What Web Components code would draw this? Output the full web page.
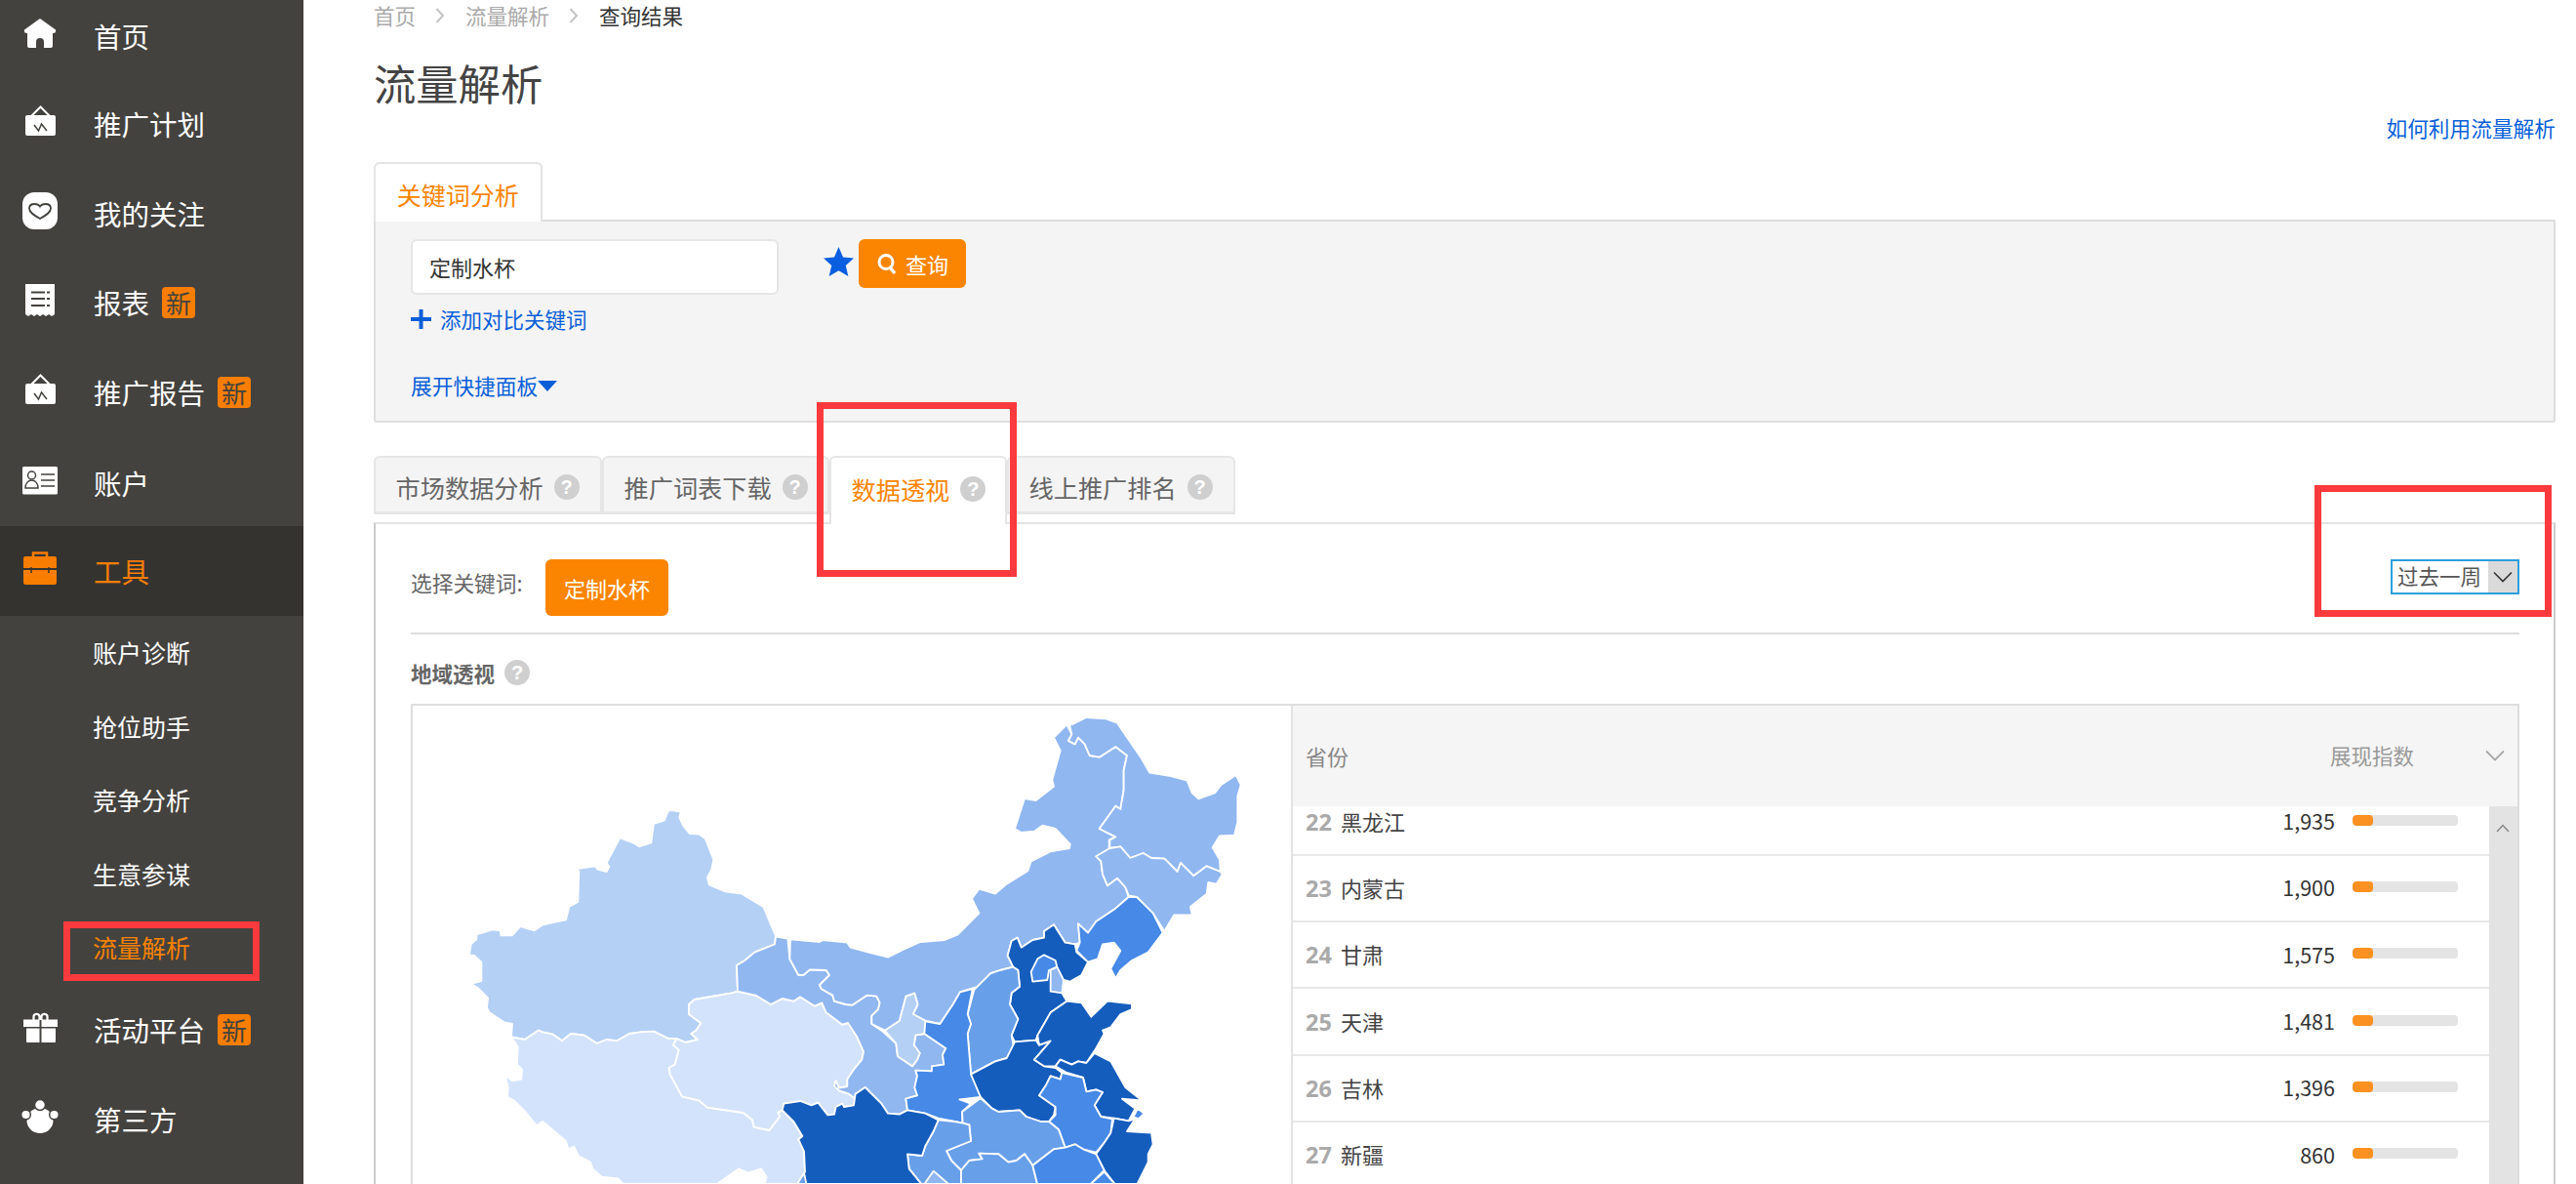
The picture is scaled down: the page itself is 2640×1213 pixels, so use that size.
<!DOCTYPE html>
<html lang="zh">
<head>
<meta charset="utf-8">
<title>流量解析</title>
<style>
  html, body { margin: 0; padding: 0; height: 1213px; overflow: hidden; background: #fff; }
  body { display: flex; font-family: "Noto Sans CJK SC", "Liberation Sans", sans-serif; color: #333; position: relative; }
</style>
</head>
<body>
<app-sidebar>
  <nav-item icon="home" first>首页</nav-item>
  <nav-item icon="picture">推广计划</nav-item>
  <nav-item icon="heart">我的关注</nav-item>
  <nav-item icon="receipt" badge="新">报表</nav-item>
  <nav-item icon="picture" badge="新">推广报告</nav-item>
  <nav-item icon="card" style="padding-top:4px">账户</nav-item>
  <nav-item icon="case" active>工具</nav-item>
  <sub-item>账户诊断</sub-item>
  <sub-item>抢位助手</sub-item>
  <sub-item>竞争分析</sub-item>
  <sub-item>生意参谋</sub-item>
  <sub-item active>流量解析</sub-item>
  <nav-item icon="gift" badge="新">活动平台</nav-item>
  <nav-item icon="people">第三方</nav-item>
</app-sidebar>
<main-area></main-area>
<red-mark x="65" y="944" w="201" h="61"></red-mark>
<red-mark x="837" y="412" w="205" h="179"></red-mark>
<red-mark x="2372" y="497" w="243" h="135"></red-mark>

<script>
var ICONS = {
  home: `<path fill="#fff" d="M20 5 36 16.500Q37 20 33 20V33Q33 35 31 35H9Q7 35 7 33V20Q3 20 4 16.500Z"/><path fill="#44423e" d="M16 35V29a4 4 0 0 1 8 0V35Z"/>`,
  picture: `<path fill="none" stroke="#fff" stroke-width="2" d="M11 15 20.500 5.500 30 15"/><rect x="5" y="14" width="31" height="21" rx="2" fill="#fff"/><path fill="none" stroke="#44423e" stroke-width="1.500" d="M14 24 18.500 30 21.500 23 27 30"/>`,
  heart: `<rect x="2" y="1" width="36" height="38" rx="12" fill="#fff"/><path fill="none" stroke="#44423e" stroke-width="1.800" d="M20 28C14 24.500 9 21.500 9 17.500 9 14.500 11.500 13 14.500 13 17 13 19 14 20 15.500 21 14 23 13 25.500 13 28.500 13 31 14.500 31 17.500 31 21.500 26 24.500 20 28Z"/>`,
  receipt: `<path fill="#fff" d="M5 4H35V35L32 37 29 35 26 37 23 35 20 37 17 35 14 37 11 35 8 37 5 35Z"/><path stroke="#44423e" stroke-width="1.800" d="M11 12.500H25M27 12.500H30M11 19H25M27 19H30M11 26H25M27 26H30"/>`,
  card: `<rect x="2" y="6" width="36" height="28.500" rx="1.500" fill="#fff"/><circle cx="11.500" cy="15" r="4" fill="none" stroke="#44423e" stroke-width="1.500"/><path fill="none" stroke="#44423e" stroke-width="1.500" d="M5 28C5 23 8 20 11.500 20S18 23 18 28ZM21 14H35M21 20H35M21 26H35"/>`,
  case: `<path fill="none" stroke="#f97d00" stroke-width="2.500" d="M13 9V4.500H27V9"/><path fill="#f97d00" d="M5 8H35Q37 8 37 10V20H3V10Q3 8 5 8ZM3 22H37V35Q37 37 35 37H5Q3 37 3 35Z"/><path stroke="#353330" stroke-width="1.500" d="M11 19V25M29 19V25"/>`,
  gift: `<path fill="none" stroke="#fff" stroke-width="2.200" d="M19.500 13V9A3.200 3.200 0 0 0 13.500 9V13M21.500 13V9A3.200 3.200 0 0 1 27.500 9V13"/><path fill="#fff" d="M3 12.500H19.500V20H3ZM21.500 12.500H38V20H21.500ZM6 21.500H19.500V36H7Q6 36 6 35ZM21.500 21.500H36V35Q36 36 35 36H21.500Z"/>`,
  people: `<ellipse cx="20" cy="24" rx="13.500" ry="13" fill="#fff"/><g fill="#fff" stroke="#44423e" stroke-width="1.500"><circle cx="20" cy="8" r="5.500"/><circle cx="5.500" cy="18" r="4.800"/><circle cx="34.500" cy="18" r="4.800"/></g>`
};

class AppSidebar extends HTMLElement {
  constructor() {
    super();
    this.attachShadow({ mode: "open" }).innerHTML = `
      <style>
        :host { display: block; flex: 0 0 311px; width: 311px; height: 1213px; background: #44423e; overflow: hidden; }
      </style>
      <slot></slot>`;
  }
}

class NavItem extends HTMLElement {
  constructor() {
    super();
    var badge = this.getAttribute("badge");
    this.attachShadow({ mode: "open" }).innerHTML = `
      <style>
        :host { display: flex; align-items: center; height: 91.5px; padding-left: 21px; color: #fff; font-size: 28.500px; box-sizing: border-box; }
        :host([first]) { height: 81.500px; padding-bottom: 7px; }
        :host([active]) { background: #353330; color: #f77e00; }
        svg { width: 40px; height: 40px; margin: 0 35px 6px 0; flex: none; }
        .text { line-height: 40px; }
        .badge { width: 34px; height: 32px; margin-left: 13px; background: #f97d00; border-radius: 4px; color: #44423e; font-size: 26px; line-height: 32px; text-align: center; }
      </style>
      <svg viewBox="0 0 40 40">${ICONS[this.getAttribute("icon")]}</svg>
      <span class="text"><slot></slot></span>
      ${badge ? `<span class="badge">${badge}</span>` : ""}`;
  }
}

class SubItem extends HTMLElement {
  constructor() {
    super();
    this.attachShadow({ mode: "open" }).innerHTML = `
      <style>
        :host { display: block; box-sizing: border-box; height: 75.500px; line-height: 73.500px; padding-left: 95px; color: #fff; font-size: 25px; }
        :host([active]) { color: #f98200; }
        :host(:first-of-type) { margin-top: 1.500px; }
      </style>
      <slot></slot>`;
  }
}

class RedMark extends HTMLElement {
  constructor() {
    super();
    this.attachShadow({ mode: "open" }).innerHTML = `
      <style>
        :host { display: block; position: absolute; box-sizing: border-box; border: 7px solid #fb3a3d; z-index: 5; pointer-events: none; }
      </style>`;
    this.style.left = this.getAttribute("x") + "px";
    this.style.top = this.getAttribute("y") + "px";
    this.style.width = this.getAttribute("w") + "px";
    this.style.height = this.getAttribute("h") + "px";
  }
}

class HelpIcon extends HTMLElement {
  constructor() {
    super();
    this.attachShadow({ mode: "open" }).innerHTML = `
      <style>
        :host { display: inline-block; width: 26px; height: 26px; border-radius: 50%; background: #cfcfcf; color: #fff; font: bold 20px/26px "Liberation Sans", sans-serif; text-align: center; flex: none; }
      </style>?`;
  }
}

class BreadCrumb extends HTMLElement {
  constructor() {
    super();
    var chev = `<svg width="10" height="18" viewBox="0 0 10 18"><path d="M1.500 2 8 9 1.500 16" fill="none" stroke="#c4c4c4" stroke-width="2"/></svg>`;
    this.attachShadow({ mode: "open" }).innerHTML = `
      <style>
        :host { display: flex; align-items: center; height: 32px; font-size: 21.500px; line-height: 32px; color: #aaa; }
        svg { margin: 0 21px 0 20px; }
        b { font-weight: normal; color: #333; }
      </style>
      <span>首页</span>${chev}<span>流量解析</span>${chev}<b>查询结果</b>`;
  }
}

class PageHead extends HTMLElement {
  constructor() {
    super();
    this.attachShadow({ mode: "open" }).innerHTML = `
      <style>
        :host { display: flex; justify-content: space-between; height: 134px; }
        h1 { margin: 22px 0 0; font-size: 43.300px; line-height: 60px; font-weight: normal; color: #444; }
        a { align-self: flex-end; margin-bottom: 20px; font-size: 21.700px; line-height: 30px; color: #0a5fd8; }
      </style>
      <h1>流量解析</h1>
      <a>如何利用流量解析</a>`;
  }
}

class KeywordPanel extends HTMLElement {
  constructor() {
    super();
    this.attachShadow({ mode: "open" }).innerHTML = `
      <style>
        :host { display: block; }
        .tab { position: relative; z-index: 1; width: 172.500px; height: 61px; box-sizing: border-box; border: 2px solid #e4e4e4; border-bottom: 0; border-radius: 6px 6px 0 0; background: #fff; color: #fb8500; font-size: 25px; line-height: 62px; text-align: center; }
        .panel { margin-top: -2px; height: 208px; box-sizing: border-box; padding: 18px 36px; background: #f4f4f4; border: 2px solid #dedede; border-radius: 0 0 3px 3px; }
        .row { display: flex; align-items: flex-start; }
        .input { width: 377px; height: 57px; box-sizing: border-box; background: #fff; border: 2px solid #e6e6e6; border-radius: 6px; padding-left: 17px; font-size: 22px; line-height: 52px; color: #333; }
        .star { margin: 8px 5px 0 46px; }
        .btn { display: flex; align-items: center; gap: 8px; width: 110px; height: 50px; box-sizing: border-box; padding-left: 18px; background: #fb8500; border-radius: 6px; color: #fff; font-size: 22px; }
        .add { display: flex; align-items: center; gap: 9px; margin-top: 10px; font-size: 21.500px; line-height: 30px; color: #0a5fd8; }
        .more { display: flex; align-items: center; margin-top: 38px; font-size: 21.700px; line-height: 30px; color: #0a5fd8; }
      </style>
      <div class="tab">关键词分析</div>
      <div class="panel">
        <div class="row">
          <div class="input">定制水杯</div>
          <svg class="star" width="31" height="30" viewBox="0 0 31 30"><path fill="#0a5fe0" d="M15.500 0 20 10.500 31 11.500 22.800 19 25.300 30 15.500 24.200 5.700 30 8.200 19 0 11.500 11 10.500Z"/></svg>
          <div class="btn"><svg width="22" height="24" viewBox="0 0 22 24"><circle cx="10" cy="10.500" r="7" fill="none" stroke="#fff" stroke-width="3"/><path d="M14 16 19 22" stroke="#fff" stroke-width="3.500"/></svg>查询</div>
        </div>
        <div class="add"><svg width="21" height="22" viewBox="0 0 21 22"><path d="M10.500 1V21M0 11H21" stroke="#0a5fd8" stroke-width="4"/></svg>添加对比关键词</div>
        <div class="more">展开快捷面板<svg width="20" height="11" viewBox="0 0 20 11"><path fill="#0a5fd8" d="M0 0H20L10 11Z"/></svg></div>
      </div>`;
  }
}

class TabBar extends HTMLElement {
  constructor() {
    super();
    this.attachShadow({ mode: "open" }).innerHTML = `
      <style>
        :host { display: flex; align-items: flex-start; height: 68px; margin-top: 34px; position: relative; z-index: 1; }
        .tab { display: flex; align-items: center; gap: 11px; height: 60px; box-sizing: border-box; padding: 5px 0 0 20.500px; border: 2px solid #e6e6e6; border-bottom-width: 3px; border-radius: 6px 6px 0 0; background: #f4f4f4; color: #666; font-size: 25.200px; }
        .on { height: 70px; padding-top: 5px; padding-bottom: 10px; background: #fff; color: #fb8500; border-bottom: 0; }
      </style>
      <div class="tab" style="width:234px">市场数据分析<help-icon></help-icon></div>
      <div class="tab" style="width:233px">推广词表下载<help-icon></help-icon></div>
      <div class="tab on" style="width:182px">数据透视<help-icon></help-icon></div>
      <div class="tab" style="width:234px">线上推广排名<help-icon></help-icon></div>`;
  }
}

class ChinaMap extends HTMLElement {
  constructor() {
    super();
    var C = { a: "#155dbd", b: "#4689e6", c: "#689fe9", d: "#90b7f0", e: "#b4d0f5", f: "#d3e3fb" };
    // west is traced in the crop starting at x=400, east in the crop at x=860, so x below can go negative
    var shapes = [
      ["e", "-517,363 -487,368 -491,385 -480,410 -460,435 -430,437 -412,450 -386,515 -392,545 -405,570 -400,592 -350,613 -300,620 -233,660 -195,750 -198,775 -260,800 -290,825 -315,840 -312,920 -330,925 -445,945 -462,960 -462,990 -425,1018 -440,1040 -455,1050 -435,1068 -472,1077 -500,1065 -525,1065 -570,1043 -610,1045 -645,1050 -683,1072 -715,1068 -745,1080 -783,1055 -825,1050 -852,1072 -880,1052 -912,1045 -925,1040 -967,1068 -1008,1060 -1005,1020 -1030,1015 -1075,985 -1083,970 -1080,940 -1110,910 -1132,897 -1118,893 -1100,888 -1100,830 -1122,810 -1137,808 -1132,775 -1115,760 -1115,745 -1065,730 -1042,733 -1040,748 -1005,748 -980,720 -937,733 -910,715 -840,700 -830,660 -803,645 -800,550 -817,545 -750,535 -743,545 -715,552 -707,537 -715,525 -674,448 -630,465 -615,475 -578,463 -570,405 -538,395 -525,365"],
      ["f", "-1008,1060 -967,1068 -925,1040 -912,1045 -880,1052 -852,1072 -825,1050 -783,1055 -745,1080 -715,1068 -683,1072 -645,1050 -610,1045 -570,1043 -525,1065 -500,1065 -510,1085 -493,1100 -505,1145 -523,1155 -520,1175 -483,1243 -432,1255 -405,1277 -295,1293 -267,1315 -262,1337 -215,1347 -183,1305 -188,1292 -175,1285 -140,1320 -113,1365 -125,1375 -108,1412 -105,1475 -130,1515 -230,1515 -223,1490 -240,1465 -280,1478 -308,1465 -380,1515 -660,1515 -680,1495 -730,1490 -758,1465 -765,1445 -802,1425 -815,1397 -833,1405 -840,1380 -912,1320 -930,1333 -965,1290 -1000,1255 -1020,1245 -1018,1215 -1025,1187 -1015,1185 -1005,1195 -977,1190 -975,1160 -990,1145 -988,1090"],
      ["f", "-312,920 -255,933 -210,960 -175,942 -140,950 -120,937 -75,965 -53,955 -40,985 10,1022 27,1017 55,1060 75,1105 70,1130 45,1160 25,1190 25,1212 0,1217 -10,1195 -15,1210 0,1225 30,1235 50,1250 45,1270 15,1275 10,1265 -10,1275 -15,1298 -35,1300 -65,1262 -85,1270 -120,1257 -170,1265 -175,1285 -188,1292 -183,1305 -215,1347 -262,1337 -267,1315 -295,1293 -405,1277 -432,1255 -483,1243 -520,1175 -523,1155 -505,1145 -493,1100 -510,1085 -500,1065 -472,1077 -435,1068 -455,1050 -440,1040 -425,1018 -462,990 -462,960 -445,945 -330,925"],
      ["d", "-195,752 -158,758 -152,820 -125,870 -110,870 -90,853 -40,855 -30,870 -60,900 -55,912 -20,932 -15,950 20,960 40,962 85,932 115,935 125,955 120,975 100,995 100,1020 130,1040 175,1080 180,1120 225,1150 240,1130 248,1110 230,1085 235,1055 262,1050 328,1095 318,1115 322,1145 285,1150 285,1165 235,1163 240,1180 232,1215 240,1240 205,1250 210,1285 185,1298 150,1295 130,1265 80,1215 50,1235 50,1250 30,1235 0,1225 -15,1210 -10,1195 0,1217 25,1212 25,1190 45,1160 70,1130 75,1105 55,1060 27,1017 10,1022 -40,985 -53,955 -75,965 -120,937 -140,950 -175,942 -210,960 -255,933 -312,920 -315,840 -290,825 -260,800 -198,775"],
      ["e", "140,1040 185,1010 205,935 232,925 242,960 228,990 268,1008 262,1050 235,1055 230,1085 248,1110 240,1130 225,1150 180,1120 175,1080"],
      ["d", "-150,760 -60,768 -50,762 25,770 35,785 90,800 150,815 200,790 250,768 325,762 365,745 430,680 408,635 430,605 480,620 515,590 580,550 590,520 650,490 708,480 710,468 665,420 625,410 600,428 560,432 540,420 570,327 605,333 660,290 655,270 680,180 660,140 700,100 715,130 705,150 725,160 735,140 755,160 770,195 800,200 850,168 885,195 875,240 875,300 865,360 850,350 800,420 850,445 830,455 830,490 790,505 805,520 810,560 825,595 855,572 880,600 890,630 850,665 790,705 765,740 735,712 740,770 725,775 695,770 660,715 630,735 630,755 595,762 560,785 548,755 530,765 518,810 535,845 495,855 465,865 430,905 410,910 372,922 350,960 310,1020 265,1010 228,990 242,960 232,925 205,935 185,1010 140,1040 100,1020 100,995 120,975 125,955 115,935 85,932 40,962 20,960 -15,950 -20,932 -55,912 -60,900 -30,870 -40,855 -90,853 -110,870 -125,870 -152,820"],
      ["d", "715,100 760,78 820,82 855,95 930,205 955,248 1020,258 1070,272 1085,310 1105,328 1155,310 1175,285 1220,255 1235,285 1225,320 1225,400 1215,440 1170,442 1148,478 1170,515 1172,552 1130,535 1090,565 1050,525 1040,552 1000,512 960,510 935,495 895,510 865,475 832,480 832,455 850,445 800,420 850,350 865,360 875,300 875,240 885,195 850,168 800,200 770,195 755,160 735,140 725,160 705,150 715,130 708,100"],
      ["d", "832,480 865,475 895,510 935,495 960,510 1000,512 1040,552 1050,525 1090,565 1130,535 1172,552 1178,560 1160,590 1135,585 1130,620 1080,660 1085,685 1030,685 1000,735 965,680 935,650 915,630 890,625 880,600 855,572 825,595 810,560 805,520 790,505"],
      ["b", "890,630 915,630 935,650 965,680 995,740 950,800 900,825 865,855 850,880 835,850 865,795 845,770 810,775 795,820 765,830 730,795 740,770 735,712 765,740 790,705 850,665"],
      ["a", "518,810 530,765 548,755 560,785 595,762 630,755 630,735 660,715 695,770 725,775 730,800 765,830 745,870 710,890 690,885 685,925 700,950 650,985 610,1055 605,1070 540,1075 530,1055 550,1005 525,960 530,925 555,905 550,855 535,845"],
      ["b", "630,808 665,825 670,845 645,855 640,885 595,890 590,860 610,820"],
      ["d", "670,845 690,885 685,925 650,920 650,855"],
      ["c", "535,845 550,855 555,905 530,925 525,960 550,1005 530,1055 540,1110 515,1125 480,1135 405,1175 395,1050 405,1020 395,990 415,915 465,865 495,855"],
      ["b", "410,912 395,990 405,1020 395,1050 405,1170 435,1245 370,1252 405,1265 378,1290 380,1325 355,1320 305,1310 265,1295 210,1285 205,1250 240,1240 232,1215 240,1180 235,1163 285,1165 285,1150 322,1145 318,1115 328,1095 262,1050 265,1012 310,1020 350,960 372,922"],
      ["a", "405,1175 480,1135 515,1125 540,1075 605,1070 615,1085 650,1072 600,1130 630,1150 665,1155 685,1170 680,1190 650,1180 635,1210 615,1240 665,1275 660,1300 645,1320 620,1320 575,1305 555,1285 490,1290 470,1280 435,1245"],
      ["a", "610,1055 650,985 700,950 745,955 775,998 825,950 900,958 900,975 865,990 835,1030 810,1040 815,1050 790,1095 760,1140 735,1135 715,1145 680,1130 665,1150 630,1150 600,1130 650,1072 615,1085"],
      ["a", "680,1130 715,1145 735,1135 760,1140 785,1110 835,1135 880,1215 930,1255 870,1250 910,1280 890,1318 845,1310 805,1305 785,1270 810,1230 790,1222 760,1228 750,1185 700,1170 665,1150"],
      ["b", "918,1280 938,1295 920,1312 905,1305"],
      ["b", "650,1180 680,1190 685,1170 750,1185 760,1228 790,1222 810,1230 785,1270 805,1305 840,1312 835,1355 815,1385 790,1415 750,1405 725,1390 695,1400 675,1345 645,1320 665,1300 665,1275 615,1240 635,1210"],
      ["a", "845,1310 890,1318 910,1312 885,1350 960,1355 965,1390 950,1420 950,1445 915,1515 850,1515 815,1470 790,1420 815,1385 835,1355"],
      ["c", "378,1290 435,1248 470,1280 490,1290 555,1285 575,1305 620,1320 645,1320 675,1345 695,1400 660,1405 595,1455 570,1420 545,1440 520,1445 490,1420 430,1418 440,1435 400,1440 375,1470 345,1440 330,1410 405,1380 400,1330 380,1325"],
      ["c", "305,1315 355,1320 380,1325 400,1330 405,1380 330,1410 345,1440 375,1470 375,1515 255,1515 215,1465 210,1420 255,1425 265,1395 290,1350"],
      ["c", "375,1470 400,1440 440,1435 430,1418 490,1420 520,1445 545,1440 570,1420 595,1455 610,1515 375,1515"],
      ["b", "595,1455 660,1405 695,1400 725,1390 750,1405 790,1420 815,1470 770,1515 610,1515"],
      ["b", "815,1475 850,1515 770,1515"],
      ["d", "260,1515 290,1472 340,1515"],
      ["a", "-170,1265 -120,1257 -85,1270 -65,1262 -35,1300 -15,1298 -10,1275 10,1265 15,1275 45,1270 50,1235 80,1215 130,1265 150,1295 185,1298 210,1285 265,1295 305,1315 290,1350 265,1395 255,1425 210,1420 215,1465 255,1515 -125,1515 -105,1475 -108,1412 -125,1375 -113,1365 -140,1320 -175,1285"],
      ["c", "-130,1515 -108,1478 -100,1515"]
    ];
    var polys = shapes.map(function (s) {
      return `<polygon fill="${C[s[0]]}" points="${s[1]}"/>`;
    }).join("");
    this.attachShadow({ mode: "open" }).innerHTML = `
      <style>
        :host { display: block; flex: 0 0 900px; width: 900px; height: 489px; overflow: hidden; }
        svg { display: block; }
      </style>
      <svg width="900" height="489" viewBox="423 724 900 489">
        <g transform="translate(860 710) scale(.33333)" stroke="#fff" stroke-width="5.500" stroke-linejoin="round">${polys}</g>
      </svg>`;
  }
}

class ProvinceRow extends HTMLElement {
  constructor() {
    super();
    this.attachShadow({ mode: "open" }).innerHTML = `
      <style>
        :host { display: flex; align-items: center; height: 68.300px; box-sizing: border-box; border-bottom: 2px solid #e8e8e8; padding: 0 32px 0 13px; flex: none; }
        .rank { width: 36px; font: bold 23.500px "Open Sans", sans-serif; color: #aaa; }
        .name { flex: 1; font-size: 22px; color: #444; margin-bottom: 2px; }
        .num { font-size: 21.500px; color: #333; margin-right: 18px; margin-bottom: 2px; }
        .bar { width: 108px; height: 11px; margin-bottom: 3px; background: #e4e4e4; border-radius: 4px; overflow: hidden; }
        .bar i { display: block; width: 21px; height: 100%; background: #fb9120; border-radius: 4px; }
      </style>
      <span class="rank">${this.getAttribute("rank")}</span>
      <span class="name">${this.getAttribute("name")}</span>
      <span class="num">${this.getAttribute("num")}</span>
      <div class="bar"><i></i></div>`;
  }
}

class ProvinceTable extends HTMLElement {
  constructor() {
    super();
    this.attachShadow({ mode: "open" }).innerHTML = `
      <style>
        :host { display: flex; flex-direction: column; flex: 1; min-width: 0; border-left: 2px solid #e2e2e2; }
        .head { display: flex; align-items: center; height: 103px; background: #f5f5f5; padding: 0 13px; font-size: 22px; color: #888; flex: none; }
        .head .s { flex: 1; margin-bottom: 1px; }
        .head .z { font-size: 21.500px; margin-bottom: 3px; color: #999; }
        .head svg { margin: 0 0 2px 73px; }
        .body { display: flex; flex: 1; min-height: 0; overflow: hidden; }
        .rows { flex: 1; display: flex; flex-direction: column; margin-top: -17.500px; }
        .scroll { flex: 0 0 29px; background: #e3e3e3; padding: 8px 0 0 7px; box-sizing: border-box; }
      </style>
      <div class="head">
        <span class="s">省份</span><span class="z">展现指数</span>
        <svg width="20" height="12" viewBox="0 0 20 12"><path d="M1 1.500 10 10.500 19 1.500" fill="none" stroke="#a8a8a8" stroke-width="1.800"/></svg>
      </div>
      <div class="body">
        <div class="rows">
          <province-row rank="22" name="黑龙江" num="1,935"></province-row>
          <province-row rank="23" name="内蒙古" num="1,900"></province-row>
          <province-row rank="24" name="甘肃" num="1,575"></province-row>
          <province-row rank="25" name="天津" num="1,481"></province-row>
          <province-row rank="26" name="吉林" num="1,396"></province-row>
          <province-row rank="27" name="新疆" num="860"></province-row>
        </div>
        <div class="scroll"><svg width="14" height="9" viewBox="0 0 14 9"><path d="M1 8 7 1.500 13 8" fill="none" stroke="#888" stroke-width="1.500"/></svg></div>
      </div>`;
  }
}

class DataPanel extends HTMLElement {
  constructor() {
    super();
    this.attachShadow({ mode: "open" }).innerHTML = `
      <style>
        :host { display: block; box-sizing: border-box; height: 700px; padding: 36px 35px 0 36px; border: 2px solid #ccc; border-top-color: #e4e4e4; }
        .filter { display: flex; align-items: flex-start; height: 77px; box-sizing: border-box; padding-bottom: 17px; border-bottom: 2px solid #ddd; }
        .label { width: 117px; margin-top: 9px; font-size: 21.700px; line-height: 30px; color: #666; white-space: nowrap; }
        .kw { width: 126px; height: 58px; margin-left: 21px; background: #fb8500; border-radius: 6px; color: #fff; font-size: 22px; line-height: 58px; text-align: center; }
        .select { display: flex; margin-left: auto; width: 132px; height: 36px; box-sizing: border-box; border: 2px solid #2b9fdc; font-size: 21.500px; line-height: 30px; color: #555; padding-left: 5px; justify-content: space-between; }
        .select span { flex: none; display: flex; align-items: center; justify-content: center; width: 30px; background: #dadada; }
        .title { display: flex; align-items: center; gap: 10px; margin: 24px 0 17px; height: 30px; font-size: 21.500px; font-weight: bold; color: #666; }
        .geo { display: flex; height: 500px; border: 2px solid #ddd; border-bottom: 0; }
      </style>
      <div class="filter">
        <span class="label">选择关键词:</span>
        <div class="kw">定制水杯</div>
        <div class="select">过去一周<span><svg width="20" height="12" viewBox="0 0 20 12"><path d="M1 1.500 10 10.500 19 1.500" fill="none" stroke="#333" stroke-width="1.600"/></svg></span></div>
      </div>
      <div class="title">地域透视<help-icon></help-icon></div>
      <div class="geo"><china-map></china-map><province-table></province-table></div>`;
  }
}

class MainArea extends HTMLElement {
  constructor() {
    super();
    this.attachShadow({ mode: "open" }).innerHTML = `
      <style>
        :host { display: block; flex: 1; min-width: 0; padding: 0 21px 0 72px; overflow: hidden; height: 1213px; box-sizing: border-box; }
      </style>
      <bread-crumb></bread-crumb>
      <page-head></page-head>
      <keyword-panel></keyword-panel>
      <tab-bar></tab-bar>
      <data-panel></data-panel>`;
  }
}

customElements.define("app-sidebar", AppSidebar);
customElements.define("nav-item", NavItem);
customElements.define("sub-item", SubItem);
customElements.define("red-mark", RedMark);
customElements.define("help-icon", HelpIcon);
customElements.define("bread-crumb", BreadCrumb);
customElements.define("page-head", PageHead);
customElements.define("keyword-panel", KeywordPanel);
customElements.define("tab-bar", TabBar);
customElements.define("china-map", ChinaMap);
customElements.define("province-row", ProvinceRow);
customElements.define("province-table", ProvinceTable);
customElements.define("data-panel", DataPanel);
customElements.define("main-area", MainArea);
</script>
</body>
</html>
